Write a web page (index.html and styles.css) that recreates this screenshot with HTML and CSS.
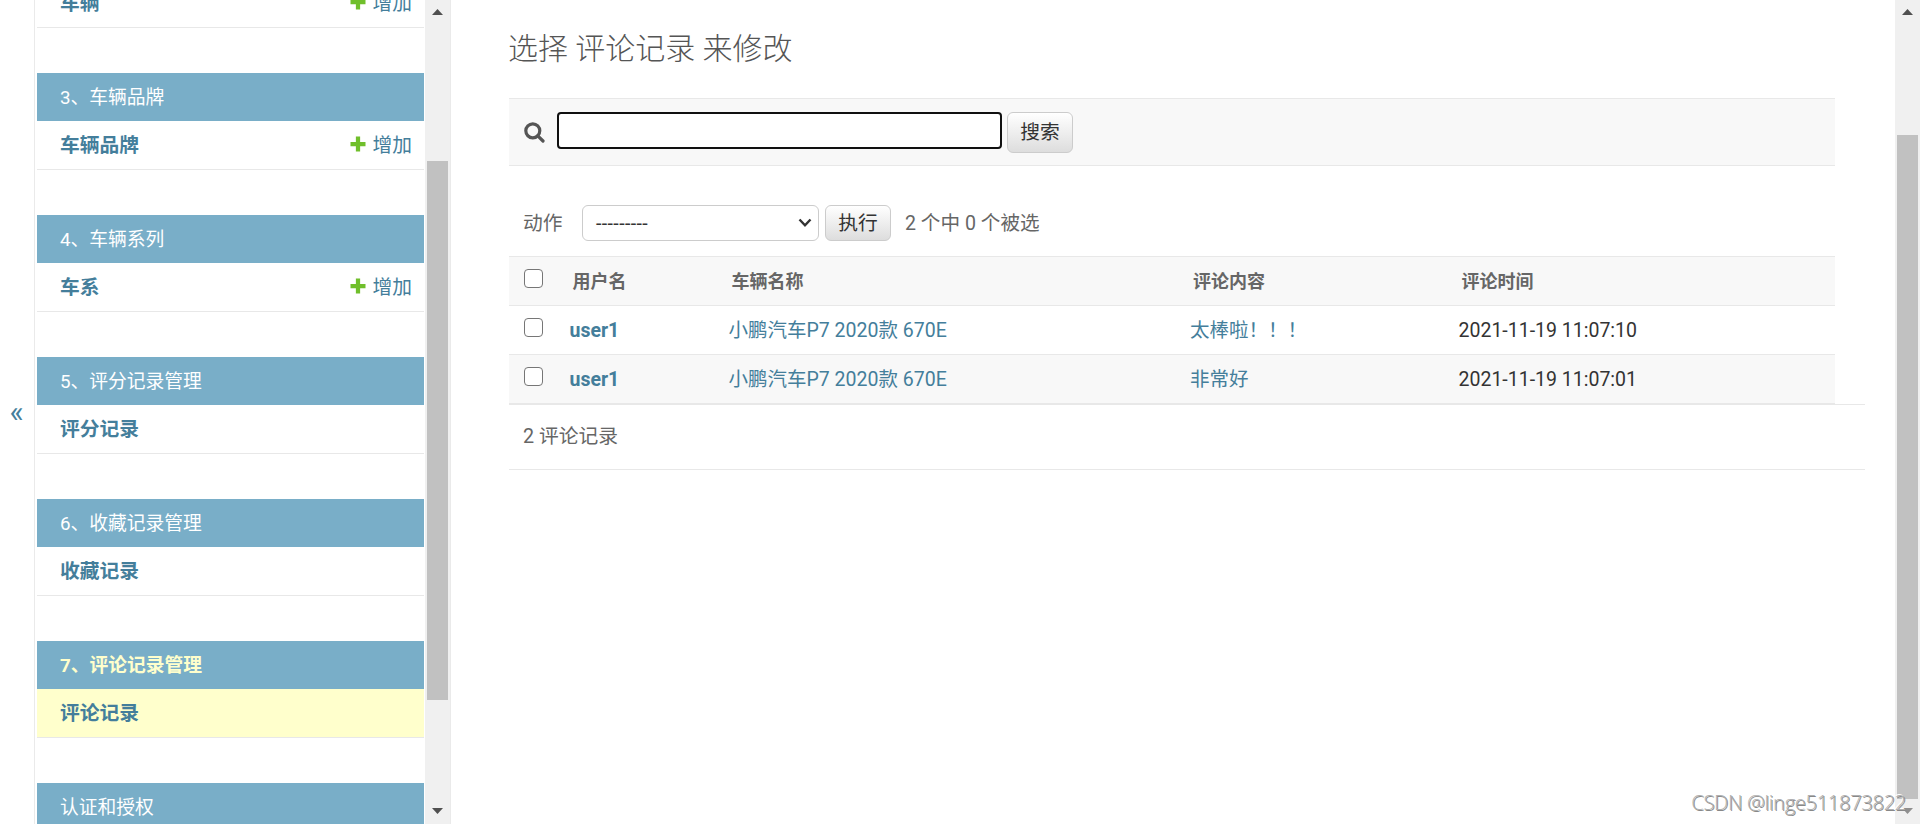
FILE: index.html
```html
<!DOCTYPE html>
<html lang="zh-hans">

<head>
    <meta charset="UTF-8">
    <meta name="viewport" content="width=device-width, initial-scale=1.0">
    <title>选择 评论记录 来修改</title>
    <link rel="stylesheet" href="styles.css">
</head>

<body>
    <div class="main">
        <button class="toggle-nav-sidebar" type="button">«</button>

        <nav class="nav-sidebar">
            <div class="app-list">
                <div class="module">
                    <div class="model-row">
                        <a class="model-link" href="#">车辆</a>
                        <a class="add-link" href="#"><svg class="icon-add" viewBox="0 0 16 16"><path d="M8 2v12M2 8h12"/></svg>增加</a>
                    </div>
                </div>
                <div class="module">
                    <div class="caption">3、车辆品牌</div>
                    <div class="model-row">
                        <a class="model-link" href="#">车辆品牌</a>
                        <a class="add-link" href="#"><svg class="icon-add" viewBox="0 0 16 16"><path d="M8 2v12M2 8h12"/></svg>增加</a>
                    </div>
                </div>
                <div class="module">
                    <div class="caption">4、车辆系列</div>
                    <div class="model-row">
                        <a class="model-link" href="#">车系</a>
                        <a class="add-link" href="#"><svg class="icon-add" viewBox="0 0 16 16"><path d="M8 2v12M2 8h12"/></svg>增加</a>
                    </div>
                </div>
                <div class="module">
                    <div class="caption">5、评分记录管理</div>
                    <div class="model-row">
                        <a class="model-link" href="#">评分记录</a>
                    </div>
                </div>
                <div class="module">
                    <div class="caption">6、收藏记录管理</div>
                    <div class="model-row">
                        <a class="model-link" href="#">收藏记录</a>
                    </div>
                </div>
                <div class="module current">
                    <div class="caption">7、评论记录管理</div>
                    <div class="model-row">
                        <a class="model-link" href="#">评论记录</a>
                    </div>
                </div>
                <div class="module">
                    <div class="caption">认证和授权</div>
                </div>
            </div>
            <div class="scrollbar">
                <svg class="arrow" viewBox="0 0 11 6"><path d="M5.5 0L11 6H0z"/></svg>
                <div class="thumb thumb-nav"></div>
                <svg class="arrow arrow-down" viewBox="0 0 11 6"><path d="M0 0h11L5.5 6z"/></svg>
            </div>
        </nav>

        <div class="content">
            <h1>选择 评论记录 来修改</h1>

            <form class="search-bar">
                <svg class="icon-search" viewBox="0 0 21 21"><circle cx="8.8" cy="8.8" r="7"/><path d="M13.8 13.8l5.2 5.2"/></svg>
                <input class="search-input" type="text">
                <button class="button button-search" type="button">搜索</button>
            </form>

            <div class="actions">
                <label>动作</label>
                <div class="select">
                    <span class="select-value">---------</span>
                    <svg class="icon-chevron" viewBox="0 0 14 10"><path d="M1.5 1.5L7 7.3l5.5-5.8"/></svg>
                </div>
                <button class="button button-go" type="button">执行</button>
                <span class="counter">2 个中 0 个被选</span>
            </div>

            <table class="result-list">
                <thead>
                    <tr>
                        <th class="col-check"><input type="checkbox"></th>
                        <th class="col-user">用户名</th>
                        <th class="col-car">车辆名称</th>
                        <th class="col-text">评论内容</th>
                        <th class="col-time">评论时间</th>
                    </tr>
                </thead>
                <tbody>
                    <tr>
                        <td><input type="checkbox"></td>
                        <td><a class="user-link" href="#">user1</a></td>
                        <td><a href="#">小鹏汽车P7 2020款 670E</a></td>
                        <td><a href="#">太棒啦！！！</a></td>
                        <td>2021-11-19 11:07:10</td>
                    </tr>
                    <tr>
                        <td><input type="checkbox"></td>
                        <td><a class="user-link" href="#">user1</a></td>
                        <td><a href="#">小鹏汽车P7 2020款 670E</a></td>
                        <td><a href="#">非常好</a></td>
                        <td>2021-11-19 11:07:01</td>
                    </tr>
                </tbody>
            </table>

            <p class="paginator">2 评论记录</p>
        </div>

        <div class="scrollbar">
            <svg class="arrow" viewBox="0 0 11 6"><path d="M5.5 0L11 6H0z"/></svg>
            <div class="thumb thumb-page"></div>
            <svg class="arrow arrow-down arrow-faded" viewBox="0 0 11 6"><path d="M0 0h11L5.5 6z"/></svg>
        </div>
    </div>

    <div class="watermark">CSDN @linge511873822</div>
</body>

</html>
```
FILE: styles.css
```css
* {
    box-sizing: border-box;
}

body {
    margin: 0;
    height: 824px;
    overflow: hidden;
    background: #fff;
    color: #333;
    font-family: Roboto, "Noto Sans CJK SC", sans-serif;
    font-size: 19.5px;
}

a {
    color: #447e9b;
    text-decoration: none;
}

.main {
    display: flex;
    height: 824px;
}

/* SIDEBAR */

.toggle-nav-sidebar {
    width: 35px;
    padding: 0 1px 1px 0;
    border: 0;
    border-right: 1px solid #eaeaea;
    background: #fff;
    color: #447e9b;
    font-family: inherit;
    font-size: 30px;
}

.nav-sidebar {
    display: flex;
    width: 416px;
    padding-left: 2px;
    border-right: 1px solid #eaeaea;
    overflow: hidden;
}

.app-list {
    width: 387px;
    margin: -21px 1px 0 0;
}

.module {
    margin-bottom: 45px;
}

.caption {
    height: 48px;
    padding-left: 23px;
    background: #79aec8;
    color: #fff;
    font-size: 18.75px;
    line-height: 50px;
}

.model-row {
    display: flex;
    justify-content: space-between;
    height: 49px;
    padding: 0 12px 0 23px;
    border-bottom: 1px solid #e8e8e8;
    line-height: 50px;
}

.model-link {
    font-size: 19.75px;
    font-weight: bold;
}

.add-link {
    display: flex;
    font-size: 19.75px;
}

.icon-add {
    width: 20px;
    height: 20px;
    margin: 13px 4px 0 0;
    fill: none;
    stroke: #70bf2b;
    stroke-width: 3.4;
}

.current .caption {
    color: #ffc;
    font-weight: bold;
}

.current .model-row {
    background: #ffc;
}

/* SCROLLBARS */

.scrollbar {
    flex: none;
    width: 25px;
    height: 824px;
    padding: 9px 2px 10px;
    background: #f0f0f0;
    display: flex;
    flex-direction: column;
}

.arrow {
    flex: none;
    width: 11px;
    height: 6px;
    margin-left: 5px;
    fill: #505050;
}

.arrow-down {
    margin-top: auto;
}

.arrow-faded {
    fill: #8f8f8f;
}

.thumb {
    width: 21px;
    background: #c1c1c1;
}

.thumb-nav {
    height: 539px;
    margin-top: 146px;
}

.thumb-page {
    height: 664px;
    margin-top: 120px;
}

/* CONTENT */

.content {
    flex: 1;
    padding: 0 30px 0 58px;
}

h1 {
    margin: 0 0 0 -1px;
    height: 98px;
    color: #555;
    font-size: 30px;
    font-weight: 300;
    line-height: 98px;
}

.search-bar {
    display: flex;
    align-items: flex-start;
    width: 1326px;
    height: 68px;
    padding: 13px 15px;
    border-top: 1px solid #e8e8e8;
    border-bottom: 1px solid #e8e8e8;
    background: #f8f8f8;
}

.icon-search {
    width: 21px;
    height: 21px;
    margin: 10px 12px 0 0;
    fill: none;
    stroke: #555;
    stroke-width: 3.2;
    stroke-linecap: round;
}

.search-input {
    width: 445px;
    height: 37px;
    margin-right: 5px;
    border: 2px solid #101010;
    border-radius: 4px;
    background: #fff;
    outline: 0;
}

.button {
    width: 66px;
    padding: 0;
    border: 1px solid #ccc;
    border-radius: 6px;
    background: linear-gradient(#fff, #ddd);
    color: #333;
    font-family: inherit;
    font-size: 19.75px;
}

.button-search {
    height: 41px;
    line-height: 39px;
}

.button-go {
    height: 36px;
    line-height: 33px;
}

.actions {
    display: flex;
    align-items: flex-start;
    height: 90px;
    padding: 39px 14px 0;
    color: #666;
    line-height: 37px;
}

.actions label {
    width: 40px;
    font-size: 19.75px;
}

.select {
    display: flex;
    align-items: center;
    justify-content: space-between;
    width: 237px;
    height: 36px;
    margin: 0 6px 0 19px;
    padding: 0 6px 0 13px;
    border: 1px solid #ccc;
    border-radius: 6px;
    color: #333;
}

.select-value {
    letter-spacing: 0.4px;
}

.icon-chevron {
    width: 14px;
    height: 10px;
    fill: none;
    stroke: #333;
    stroke-width: 2.4;
}

.counter {
    margin-left: 14px;
    font-size: 19.6px;
}

.result-list {
    width: 1326px;
    border-collapse: separate;
    border-spacing: 0;
    table-layout: fixed;
}

th,
td {
    height: 49px;
    padding: 1px 0 0 12px;
    border-bottom: 1px solid #e8e8e8;
    text-align: left;
    line-height: 47px;
}

th {
    height: 50px;
    padding-top: 2px;
    padding-left: 15px;
    border-top: 1px solid #e8e8e8;
    background: #f8f8f8;
    color: #666;
    font-size: 18px;
    line-height: 46px;
}

th:first-child,
td:first-child {
    padding-top: 0;
    padding-left: 15px;
    font-size: 0;
}

tbody tr:nth-child(2) td {
    background: #f8f8f8;
}

.col-check {
    width: 48.5px;
}

.col-user {
    width: 159px;
}

.col-car {
    width: 461.5px;
}

.col-text {
    width: 268.5px;
}

.user-link {
    font-weight: bold;
}

input[type="checkbox"] {
    appearance: none;
    display: block;
    width: 19px;
    height: 19px;
    margin: 0 0 6px;
    border: 1px solid #767676;
    border-radius: 4px;
    background: #fff;
}

.paginator {
    height: 66px;
    margin: 0;
    padding-left: 14px;
    border-top: 1px solid #e8e8e8;
    border-bottom: 1px solid #e8e8e8;
    color: #666;
    font-size: 19.75px;
    line-height: 64px;
}

/* sits over the page scrollbar */
.watermark {
    position: absolute;
    right: 14px;
    bottom: 8px;
    color: #b0b0b0;
    font-family: "Open Sans", "Noto Sans", sans-serif;
    font-size: 20px;
    font-weight: 300;
    letter-spacing: -0.25px;
    text-shadow: 1px 1px 0 #888, -1px -1px 0 #fff;
}
```
